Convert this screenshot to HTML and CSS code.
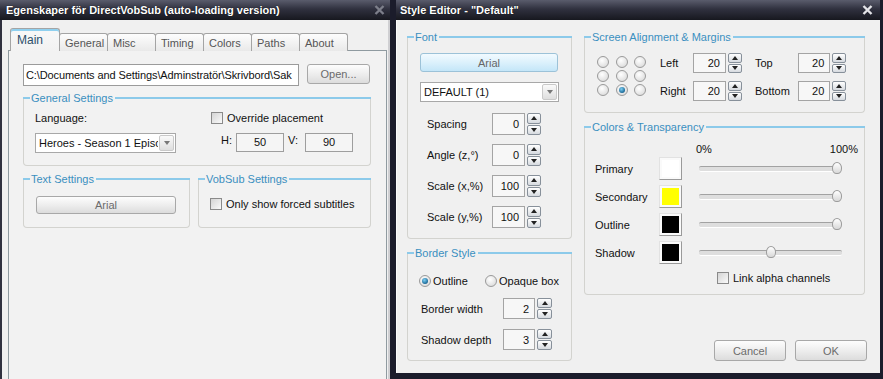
FILE: index.html
```html
<!DOCTYPE html>
<html lang="sv">
  <head>
    <meta charset="utf-8" />
    <title>DirectVobSub</title>
    <link rel="stylesheet" href="styles.css">
  </head>
  <body>
    <div class="desk">
      <section class="win win-left">
        <header class="titlebar">
          <span class="title">Egenskaper för DirectVobSub (auto-loading version)</span>
          <svg class="close dim" width="11" height="10" viewBox="0 0 11 10"><path d="M1.5 1 L9.5 9 M9.5 1 L1.5 9" /></svg>
        </header>
        <div class="win-body">
          <nav class="tabs">
            <span class="tab active">Main</span>
            <span class="tab">General</span>
            <span class="tab">Misc</span>
            <span class="tab">Timing</span>
            <span class="tab">Colors</span>
            <span class="tab">Paths</span>
            <span class="tab">About</span>
          </nav>
          <div class="panel">
            <div class="path-row">
              <div class="field path">C:\Documents and Settings\Adminstratör\Skrivbord\Sak</div>
              <button class="btn open">Open...</button>
            </div>

            <div class="group general">
              <div class="group-head">General Settings</div>
              <div class="gen-body">
                <div class="gen-left">
                  <div class="label-row">Language:</div>
                  <div class="combo lang">
                    <span class="combo-text">Heroes - Season 1 Episo</span>
                    <span class="combo-btn"></span>
                  </div>
                </div>
                <div class="gen-right">
                  <div class="check-row"><span class="check"></span>Override placement</div>
                  <div class="hv-row">
                    <span class="hv-label h">H:</span>
                    <span class="num-box">50</span>
                    <span class="hv-label v">V:</span>
                    <span class="num-box">90</span>
                  </div>
                </div>
              </div>
            </div>

            <div class="group-row">
              <div class="group text-set">
                <div class="group-head">Text Settings</div>
                <div class="text-body"><button class="btn font-btn">Arial</button></div>
              </div>
              <div class="group vob-set">
                <div class="group-head">VobSub Settings</div>
                <div class="vob-body">
                  <div class="check-row"><span class="check"></span>Only show forced subtitles</div>
                </div>
              </div>
            </div>
          </div>
        </div>
      </section>

      <section class="win win-right">
        <header class="titlebar">
          <span class="title">Style Editor - "Default"</span>
          <svg class="close" width="11" height="10" viewBox="0 0 11 10"><path d="M1.5 1 L9.5 9 M9.5 1 L1.5 9" /></svg>
        </header>
        <div class="win-body">
          <div class="col-left">
            <div class="group font-group">
              <div class="group-head">Font</div>
              <div class="font-body">
                <button class="btn btn-blue">Arial</button>
                <div class="combo style-combo">
                  <span class="combo-text">DEFAULT (1)</span>
                  <span class="combo-btn"></span>
                </div>
                <div class="spin-rows">
                  <div class="spin-row"><span class="spin-label">Spacing</span><span class="spin-input">0</span><span class="spinner"><span class="spin-btn up"></span><span class="spin-btn down"></span></span></div>
                  <div class="spin-row"><span class="spin-label">Angle (z,°)</span><span class="spin-input">0</span><span class="spinner"><span class="spin-btn up"></span><span class="spin-btn down"></span></span></div>
                  <div class="spin-row"><span class="spin-label">Scale (x,%)</span><span class="spin-input">100</span><span class="spinner"><span class="spin-btn up"></span><span class="spin-btn down"></span></span></div>
                  <div class="spin-row"><span class="spin-label">Scale (y,%)</span><span class="spin-input">100</span><span class="spinner"><span class="spin-btn up"></span><span class="spin-btn down"></span></span></div>
                </div>
              </div>
            </div>

            <div class="group border-group">
              <div class="group-head">Border Style</div>
              <div class="border-body">
                <div class="radio-row">
                  <span class="radio-opt first"><span class="radio on"></span>Outline</span>
                  <span class="radio-opt"><span class="radio"></span>Opaque box</span>
                </div>
                <div class="bw-row"><span class="bw-label">Border width</span><span class="spin-input">2</span><span class="spinner"><span class="spin-btn up"></span><span class="spin-btn down"></span></span></div>
                <div class="bw-row"><span class="bw-label">Shadow depth</span><span class="spin-input">3</span><span class="spinner"><span class="spin-btn up"></span><span class="spin-btn down"></span></span></div>
              </div>
            </div>
          </div>

          <div class="col-right">
            <div class="group screen-group">
              <div class="group-head">Screen Alignment &amp; Margins</div>
              <div class="screen-body">
                <div class="radio-grid">
                  <span class="radio"></span><span class="radio"></span><span class="radio"></span>
                  <span class="radio"></span><span class="radio"></span><span class="radio"></span>
                  <span class="radio"></span><span class="radio on"></span><span class="radio"></span>
                </div>
                <div class="margin-grid">
                  <span class="m-label">Left</span>
                  <span class="m-field"><span class="spin-input">20</span><span class="spinner"><span class="spin-btn up"></span><span class="spin-btn down"></span></span></span>
                  <span class="m-label">Top</span>
                  <span class="m-field"><span class="spin-input">20</span><span class="spinner"><span class="spin-btn up"></span><span class="spin-btn down"></span></span></span>
                  <span class="m-label">Right</span>
                  <span class="m-field"><span class="spin-input">20</span><span class="spinner"><span class="spin-btn up"></span><span class="spin-btn down"></span></span></span>
                  <span class="m-label">Bottom</span>
                  <span class="m-field"><span class="spin-input">20</span><span class="spinner"><span class="spin-btn up"></span><span class="spin-btn down"></span></span></span>
                </div>
              </div>
            </div>

            <div class="group colors-group">
              <div class="group-head">Colors &amp; Transparency</div>
              <div class="colors-body">
                <div class="pct-row"><span>0%</span><span>100%</span></div>
                <div class="color-rows">
                  <div class="color-row"><span class="c-label">Primary</span><span class="swatch"><span class="fill white"></span></span><span class="slider"><span class="thumb" style="--v:1"></span></span></div>
                  <div class="color-row"><span class="c-label">Secondary</span><span class="swatch"><span class="fill yellow"></span></span><span class="slider"><span class="thumb" style="--v:1"></span></span></div>
                  <div class="color-row"><span class="c-label">Outline</span><span class="swatch"><span class="fill black"></span></span><span class="slider"><span class="thumb" style="--v:1"></span></span></div>
                  <div class="color-row"><span class="c-label">Shadow</span><span class="swatch"><span class="fill black"></span></span><span class="slider"><span class="thumb" style="--v:0.5"></span></span></div>
                </div>
                <div class="check-row link-row"><span class="check"></span>Link alpha channels</div>
              </div>
            </div>

            <div class="btn-row">
              <button class="btn dlg">Cancel</button>
              <button class="btn dlg">OK</button>
            </div>
          </div>
        </div>
      </section>
    </div>
  </body>
</html>
```

FILE: styles.css
```css
* {
  box-sizing: border-box;
}

body {
  margin: 0;
  background-color: #1b1c2b;
  color: #111;
  font-family: "Liberation Sans", Arial, sans-serif;
  font-size: 11px;
  overflow: hidden;
}

.desk {
  display: flex;
  width: 883px;
  height: 379px;
}

/* windows */

.win {
  display: flex;
  flex-direction: column;
}

.win-left {
  width: 390px;
  height: 379px;
}

.win-right {
  width: 484px;
  height: 373px;
  margin-left: 6px;
}

.titlebar {
  display: flex;
  align-items: center;
  justify-content: space-between;
  height: 20px;
  flex-shrink: 0;
  padding: 0 5px 0 6px;
  background: linear-gradient(#5a5c6c 0%, #30313f 45%, #17181f 100%);
  color: #fff;
  font-size: 11px;
  font-weight: bold;
  text-shadow: 0 0 1px #000;
}

.win-right .titlebar {
  padding: 0 7px 0 4px;
}

.close path {
  stroke: #e4e4e8;
  stroke-width: 2.4;
  fill: none;
}

.close.dim path {
  stroke: #7d7f8a;
}

.win-body {
  flex: 1;
  background-color: #f0f0f0;
}

.win-left .win-body {
  border-left: 2px solid #30313f;
  border-right: 2px solid #cfcfd2;
  padding: 8px 0 0 6px;
  display: flex;
  flex-direction: column;
}

.win-right .win-body {
  display: flex;
  gap: 12px;
  border-left: 1px solid #fbfbfb;
  padding: 17px 0 0 10px;
}

/* tabs */

.tabs {
  display: flex;
  align-items: flex-end;
  height: 23px;
  margin: 0 0 -1px 2px;
  position: relative;
  z-index: 1;
}

.tab {
  width: 49px;
  height: 18px;
  margin-right: -1px;
  padding: 3px 0 0 5px;
  border: 1px solid #a4a4a4;
  border-bottom: 0;
  border-radius: 3px 3px 0 0;
  background: linear-gradient(#fdfdfd, #e9e9e9);
  color: #555;
}

.tab.active {
  width: 50px;
  height: 23px;
  padding: 4px 0 0 6px;
  background: linear-gradient(#f8f8f8, #f2f2f2);
  box-shadow: inset 0 2px #8fd0ef;
  color: #2c4f6a;
  font-size: 12px;
}

.panel {
  flex: 1;
  width: 379px;
  padding: 13px 0 0 14px;
  border: 1px solid #8f9aa0;
  border-bottom: 0;
  background-color: #f2f2f2;
}

/* shared controls */

.field {
  border: 1px solid #9b9b9b;
  background-color: #fff;
}

.path-row {
  display: flex;
  gap: 8px;
}

.path {
  width: 276px;
  height: 22px;
  padding: 0 2px;
  line-height: 20px;
  white-space: nowrap;
  overflow: hidden;
  letter-spacing: -0.1px;
}

.btn {
  display: flex;
  align-items: center;
  justify-content: center;
  padding: 0;
  border: 1px solid #a8a8a8;
  border-radius: 3px;
  background: linear-gradient(#fdfdfd, #ececec 55%, #dcdcdc);
  color: #6b6b6b;
  font-family: inherit;
  font-size: 11px;
}

.open {
  width: 63px;
  height: 20px;
}

.group {
  display: flex;
  flex-direction: column;
  border: 1px solid #d3d3cf;
  border-top: 0;
  border-radius: 0 0 4px 4px;
}

.group-head {
  display: flex;
  align-items: center;
  height: 14px;
  margin: -7px -1px 0;
  color: #3a8fc0;
  white-space: nowrap;
}

.group-head::before,
.group-head::after {
  content: "";
  height: 2px;
  background-color: #8ccaea;
}

.group-head::before {
  width: 7px;
  margin-right: 1px;
}

.group-head::after {
  flex: 1;
  margin-left: 2px;
}

.check-row {
  display: flex;
  align-items: center;
  gap: 4px;
  height: 14px;
}

.check {
  width: 12px;
  height: 12px;
  border: 1px solid #8a8a8a;
  background: linear-gradient(135deg, #d4d4d4, #fafafa);
}

.combo {
  display: flex;
  height: 20px;
  border: 1px solid #a8a8a8;
  background-color: #fff;
}

.combo-text {
  flex: 1;
  padding-left: 3px;
  line-height: 18px;
  white-space: nowrap;
  overflow: hidden;
}

.combo-btn {
  display: flex;
  align-items: center;
  justify-content: center;
  width: 15px;
  margin: 1px;
  border: 1px solid #c9c9c9;
  border-radius: 2px;
  background: linear-gradient(#fafafa, #dedede);
}

.combo-btn::after {
  content: "";
  border-top: 4px solid #777;
  border-left: 3.5px solid transparent;
  border-right: 3.5px solid transparent;
}

/* left window groups */

.general {
  width: 348px;
  height: 68px;
  margin-top: 12px;
}

.gen-body {
  display: flex;
  padding: 6px 0 0 11px;
}

.gen-left {
  width: 176px;
}

.label-row {
  height: 14px;
  line-height: 14px;
  margin-bottom: 8px;
}

.lang {
  width: 141px;
}

.hv-row {
  display: flex;
  align-items: center;
  height: 19px;
  margin-top: 8px;
}

.hv-label {
  align-self: flex-start;
  margin-top: 1px;
}

.hv-label.h {
  width: 15px;
  margin-left: 10px;
}

.hv-label.v {
  width: 17px;
  margin-left: 4px;
}

.num-box {
  width: 48px;
  height: 19px;
  border: 1px solid #9e9e9e;
  background-color: #f5f5f5;
  text-align: center;
  line-height: 17px;
}

.group-row {
  display: flex;
  gap: 8px;
  margin-top: 13px;
}

.text-set {
  width: 167px;
  height: 49px;
}

.text-body {
  padding: 10px 0 0 12px;
}

.font-btn {
  width: 140px;
  height: 18px;
}

.vob-set {
  width: 173px;
  height: 49px;
}

.vob-body {
  padding: 11px 0 0 11px;
}

/* style editor */

.col-left {
  width: 165px;
  display: flex;
  flex-direction: column;
}

.col-right {
  width: 281px;
  display: flex;
  flex-direction: column;
}

.font-group {
  height: 202px;
}

.font-body {
  padding: 9px 0 0 12px;
}

.btn-blue {
  width: 138px;
  height: 19px;
  border-color: #9cc2d8;
  background: linear-gradient(#f2faff, #dcf1fc 50%, #c4e6f8);
  color: #666;
}

.style-combo {
  width: 139px;
  margin-top: 10px;
}

.spin-rows {
  display: flex;
  flex-direction: column;
  gap: 9px;
  margin-top: 11px;
}

.spin-row,
.bw-row {
  display: flex;
  align-items: center;
  height: 22px;
}

.spin-row {
  padding-left: 7px;
}

.spin-label {
  width: 65px;
}

.spin-input {
  width: 33px;
  height: 100%;
  padding-right: 5px;
  border: 1px solid #a4a4a4;
  background-color: #f7f7f7;
  display: flex;
  align-items: center;
  justify-content: flex-end;
}

.spinner {
  display: flex;
  flex-direction: column;
  gap: 1px;
  width: 14px;
  height: 100%;
  margin-left: 2px;
}

.spin-btn {
  flex: 1;
  display: flex;
  align-items: center;
  justify-content: center;
  border: 1px solid #87909a;
  border-radius: 2px;
  background: linear-gradient(#ffffff, #d6dadf);
}

.spin-btn.up::after {
  content: "";
  border-bottom: 4px solid #222;
  border-left: 3.5px solid transparent;
  border-right: 3.5px solid transparent;
}

.spin-btn.down::after {
  content: "";
  border-top: 4px solid #222;
  border-left: 3.5px solid transparent;
  border-right: 3.5px solid transparent;
}

.border-group {
  height: 108px;
  margin-top: 14px;
}

.border-body {
  padding: 14px 0 0 11px;
}

.radio-row {
  display: flex;
  align-items: center;
  height: 14px;
}

.radio-opt {
  display: flex;
  align-items: center;
  gap: 2px;
}

.radio-opt.first {
  width: 66px;
}

.radio {
  display: flex;
  align-items: center;
  justify-content: center;
  width: 12px;
  height: 12px;
  border: 1px solid #9a9a9a;
  border-radius: 50%;
  background: radial-gradient(circle at 40% 35%, #ffffff, #d4d4d4);
}

.radio.on::after {
  content: "";
  width: 6px;
  height: 6px;
  border-radius: 50%;
  background: radial-gradient(circle at 40% 35%, #7fd0f4, #1b6a98 70%, #0b3c5c);
}

.bw-row {
  height: 21px;
  margin-top: 10px;
  padding-left: 2px;
}

.bw-row .spin-input {
  width: 32px;
}

.bw-row .spinner {
  width: 15px;
}

.bw-label {
  width: 82px;
}

.screen-group {
  height: 76px;
}

.screen-body {
  display: flex;
  align-items: flex-start;
  padding: 9px 0 0 12px;
}

.radio-grid {
  display: grid;
  grid-template-columns: repeat(3, 12px);
  column-gap: 6.5px;
  row-gap: 2px;
  margin-top: 3px;
}

.margin-grid {
  display: grid;
  grid-template-columns: 33px 62px 43px 48px;
  grid-auto-rows: 20px;
  row-gap: 8px;
  align-items: center;
  margin-left: 14px;
}

.m-field {
  display: flex;
  height: 20px;
}

.colors-group {
  height: 168px;
  margin-top: 14px;
}

.colors-body {
  padding: 9px 6px 0 10px;
}

.pct-row {
  display: flex;
  justify-content: space-between;
  height: 14px;
  padding-left: 101px;
}

.color-rows {
  display: flex;
  flex-direction: column;
  gap: 5px;
}

.color-row {
  display: flex;
  align-items: center;
  height: 23px;
}

.c-label {
  width: 64px;
}

.swatch {
  width: 23px;
  height: 23px;
  padding: 2px;
  border: 1px solid;
  border-color: #e2e2e2 #9a9a9a #9a9a9a #e2e2e2;
  background-color: #fafafa;
}

.fill {
  display: block;
  height: 100%;
}

.fill.white {
  background-color: #fff;
}

.fill.yellow {
  background-color: #ffff00;
}

.fill.black {
  background-color: #000;
}

.slider {
  position: relative;
  width: 143px;
  height: 23px;
  margin-left: 17px;
}

.slider::before {
  content: "";
  position: absolute;
  left: 0;
  right: 0;
  top: 9px;
  height: 4px;
  border-top: 1px solid #a2a2a2;
  border-bottom: 1px solid #ffffff;
  border-radius: 2px;
  background-color: #dedede;
}

.thumb {
  position: absolute;
  top: 5px;
  left: calc(var(--v) * 133px);
  width: 10px;
  height: 12px;
  border: 1px solid #9c9c9c;
  border-radius: 50% 50% 45% 45%;
  background: linear-gradient(#ffffff, #d8d8d8);
}

.link-row {
  margin-top: 7px;
  padding-left: 122px;
}

.btn-row {
  display: flex;
  justify-content: flex-end;
  gap: 9px;
  margin: 45px -2px 0 0;
}

.dlg {
  width: 72px;
  height: 21px;
}
```
